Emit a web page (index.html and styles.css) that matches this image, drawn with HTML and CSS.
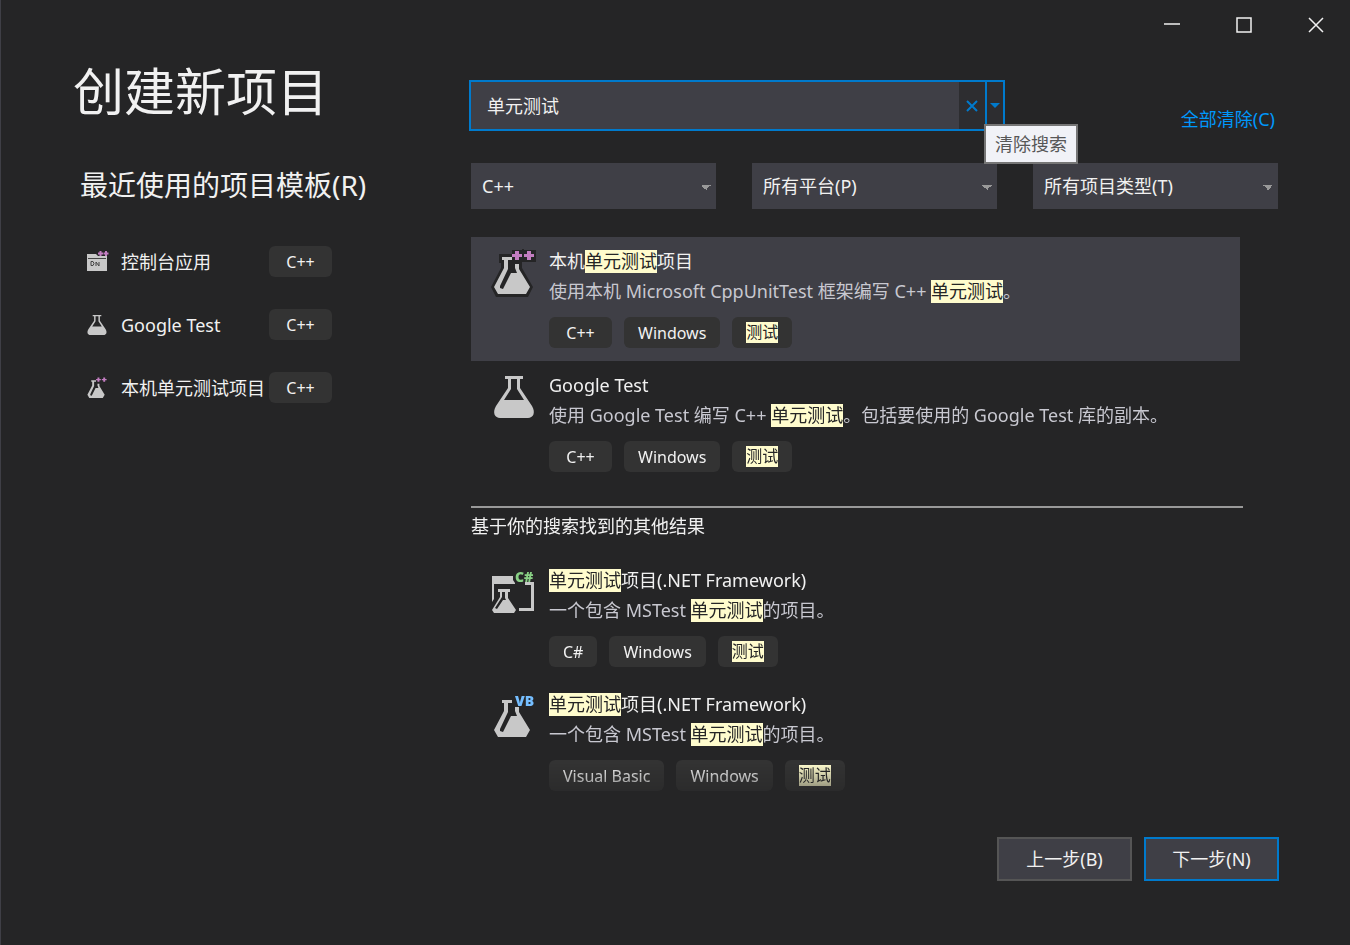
FILE: index.html
```html
<!DOCTYPE html>
<html lang="zh-CN">
<head>
<meta charset="utf-8">
<title>创建新项目</title>
<link rel="stylesheet" href="styles.css">
</head>
<body>
<svg class="sprite" aria-hidden="true">
  <symbol id="flask" viewBox="0 -3 46 50">
    <path fill="#c8c8c8" fill-rule="evenodd" d="M14 1h18v3h-3v9l12 18c4 7 1 12-4 12H9c-5 0-8-5-4-12l12-18V4h-3zM20 4v10l-7 11h20l-7-11V4z"/>
  </symbol>
  <symbol id="flask-tilt" viewBox="0 0 46 50">
    <path fill="#c8c8c8" d="M11 9h12v7h5v5l11 18-4 7H7l-4-7 10-19v-8h-2z"/>
    <path fill="#252526" d="M17 12h4V9h3v11l2 5h-6l-8 16-3-1v-2l8-17z"/>
  </symbol>
  <symbol id="flask-cpp" viewBox="0 0 46 50">
    <path fill="#252526" d="M8 6h13V2h10V1h2v1h12v12H31v6l11 19-5 10H5L0 39l10-19v-5H8z"/>
    <use href="#flask-tilt"/>
    <path fill="#252526" d="M21 5h10v9H21z"/>
    <path fill="#c27dc0" d="M24 3h4v3h3v3h-3v3h-4V9h-3V6h3zM36 3h4v3h3v3h-3v3h-4V9h-3V6h3z"/>
  </symbol>
</svg>
<div class="window">
  <header class="titlebar">
    <button aria-label="最小化"><svg viewBox="0 0 16 16"><path d="M0 7h16"/></svg></button>
    <button aria-label="最大化"><svg viewBox="0 0 16 16"><path d="M1 1h14v14H1z"/></svg></button>
    <button aria-label="关闭"><svg viewBox="0 0 16 16"><path d="M1 1l14 14M15 1L1 15"/></svg></button>
  </header>
  <main class="content">
    <aside class="recent">
      <h1>创建新项目</h1>
      <h2>最近使用的项目模板(R)</h2>
      <ul>
        <li><svg class="small-icon" viewBox="0 0 24 24"><path fill="#c8c8c8" d="M2 4h9l2 2h9v15H2z"/><path stroke="#444" fill="none" d="M3 8.500h18M6 11.500v4h2l1-2-1-2zM11 16v-4l3 4v-4"/><path stroke="#c27dc0" stroke-width="2" d="M15.500 1v5M13 3.500h5M21 1v5M18.500 3.500h5"/></svg><span>控制台应用</span><b class="tag cpp">C++</b></li>
        <li><svg class="small-icon"><use href="#flask"/></svg><span>Google Test</span><b class="tag cpp">C++</b></li>
        <li><svg class="small-icon"><use href="#flask-cpp"/></svg><span>本机单元测试项目</span><b class="tag cpp">C++</b></li>
      </ul>
    </aside>
    <section class="search">
      <div class="search-row">
        <div class="search-box">
          <input type="text" value="单元测试" aria-label="搜索模板">
          <button class="clear" aria-label="清除搜索"><svg viewBox="0 0 12 12"><path d="M1 1l10 10M11 1L1 11"/></svg></button>
          <button class="history" aria-label="搜索历史"><svg viewBox="0 0 10 5"><path d="M0 0h10L5 5z"/></svg></button>
          <div class="tooltip" role="tooltip">清除搜索</div>
        </div>
        <a class="clear-all" href="#">全部清除(C)</a>
      </div>
      <div class="filters">
        <select aria-label="语言"><option>C++</option></select>
        <select aria-label="平台"><option>所有平台(P)</option></select>
        <select aria-label="项目类型"><option>所有项目类型(T)</option></select>
      </div>
      <div class="results">
        <article class="item selected">
          <svg class="icon"><use href="#flask-cpp"/></svg>
          <div><h3>本机<mark>单元测试</mark>项目</h3>
          <p>使用本机 Microsoft CppUnitTest 框架编写 C++ <mark>单元测试</mark>。</p>
          <div class="tags"><span class="tag cpp">C++</span><span class="tag">Windows</span><span class="tag"><mark>测试</mark></span></div></div>
        </article>
        <article class="item">
          <svg class="icon"><use href="#flask"/></svg>
          <div><h3>Google Test</h3>
          <p>使用 Google Test 编写 C++ <mark>单元测试</mark>。包括要使用的 Google Test 库的副本。</p>
          <div class="tags"><span class="tag cpp">C++</span><span class="tag">Windows</span><span class="tag"><mark>测试</mark></span></div></div>
        </article>
        <h4>基于你的搜索找到的其他结果</h4>
        <article class="item">
          <svg class="icon" viewBox="0 0 46 50"><path fill="#c8c8c8" d="M1 9h21v4l2 3v1H3v15l-2 3zM34 15h9v29H28v-3h12V18h-6z"/><path fill="#c8c8c8" d="M7 22h12v3h-2v6l8 12-2 3H3l-2-3 8-13v-5H7z"/><path fill="#252526" d="M11 25h3v6l1 2h-3L6 42l-2-1 7-11z"/><text class="badge cs" x="24" y="15">C#</text></svg>
          <div><h3><mark>单元测试</mark>项目(.NET Framework)</h3>
          <p>一个包含 MSTest <mark>单元测试</mark>的项目。</p>
          <div class="tags"><span class="tag">C#</span><span class="tag">Windows</span><span class="tag"><mark>测试</mark></span></div></div>
        </article>
        <article class="item">
          <svg class="icon" viewBox="0 0 46 50"><use href="#flask-tilt"/><text class="badge vb" x="24" y="15">VB</text></svg>
          <div><h3><mark>单元测试</mark>项目(.NET Framework)</h3>
          <p>一个包含 MSTest <mark>单元测试</mark>的项目。</p>
          <div class="tags"><span class="tag">Visual Basic</span><span class="tag">Windows</span><span class="tag"><mark>测试</mark></span></div></div>
        </article>
      </div>
    </section>
  </main>
  <footer class="actions">
    <button>上一步(B)</button>
    <button class="primary">下一步(N)</button>
  </footer>
</div>
</body>
</html>
```
FILE: styles.css
```css
* { box-sizing: border-box; }
body {
  margin: 0;
  background: #252526;
  color: #f1f1f1;
  font: 18px/24px "Noto Sans", "Noto Sans CJK SC", sans-serif;
}
h1, h2, h3, h4, p, ul { margin: 0; padding: 0; font-weight: 400; }
button, input, select { font: inherit; color: inherit; border: 0; border-radius: 0; margin: 0; padding: 0; }
.sprite { position: absolute; width: 0; height: 0; }
.window { min-height: 100vh; display: flex; flex-direction: column; border-left: 1px solid #3f3f46; }
.titlebar { display: flex; justify-content: flex-end; gap: 4px; height: 50px; }
.titlebar button { width: 68px; background: none; display: grid; place-items: center; }
.titlebar svg { width: 16px; height: 16px; fill: none; stroke: #f1f1f1; stroke-width: 1.5; }
.content { flex: 1; display: grid; grid-template-columns: 396px minmax(0, 1fr); padding: 0 72px 0 72px; }
.recent h1 { font-size: 51px; line-height: 66px; margin-top: 8px; }
.recent h2 { font-size: 28px; line-height: 36px; margin: 43px 0 0 7px; }
.recent ul { list-style: none; margin: 43px 0 0 12px; display: grid; gap: 32px; }
.recent li { display: grid; grid-template-columns: 24px 160px auto; justify-content: start; align-items: center; height: 31px; }
.recent li span { padding-left: 12px; white-space: nowrap; }
.small-icon { width: 24px; height: 24px; }
.tag { display: inline-flex; align-items: center; justify-content: center; height: 31px; padding: 0 14px; border-radius: 6px; background: #333; font-size: 16px; font-weight: 400; }
.tag.cpp { min-width: 63px; }
.tag mark { line-height: 21px; }
mark { display: inline-block; background: #fffccd; color: #252526; line-height: 23px; }
.search-row { display: flex; justify-content: space-between; padding: 30px 3px 0 0; }
.search-box { position: relative; display: flex; width: 536px; height: 51px; border: 2px solid #007acc; background: #3f3f46; }
.search-box input { flex: 1; min-width: 0; background: none; padding-left: 16px; outline: 0; }
.search-box button { background: #2d2d30; display: grid; place-items: center; }
.clear { width: 26px; }
.clear svg { width: 12px; height: 12px; stroke: #007acc; stroke-width: 2; }
.history { width: 18px; }
.search-box .history { border-left: 2px solid #007acc; }
.history svg { width: 10px; height: 5px; fill: #007acc; }
.tooltip { position: absolute; top: 42px; left: 513px; padding: 6px 9px; border: 2px solid #767676; background: #f1f2f7; color: #575757; white-space: nowrap; }
.clear-all { color: #0097fb; text-decoration: none; margin-top: 27px; }
.filters { display: grid; grid-template-columns: repeat(3, 1fr); gap: 36px; margin: 32px 0 0 2px; }
.filters select {
  appearance: none; height: 46px; padding: 0 32px 0 11px;
  background:
    linear-gradient(45deg, transparent 50%, #999 50%) right 10px top 22px / 5px 5px no-repeat,
    linear-gradient(315deg, transparent 50%, #999 50%) right 5px top 22px / 5px 5px no-repeat,
    #3f3f46;
}
.results { margin: 28px 35px 0 2px; mask-image: linear-gradient(#000 calc(100% - 40px), rgba(0, 0, 0, 0.2)); }
.item { display: flex; padding: 12px 0 13px 20px; margin-right: 3px; }
.item.selected { background: #3f3f46; }
.icon { width: 46px; height: 50px; margin: -1px 12px 0 0; flex: none; overflow: visible; }
.item p { margin-top: 6px; color: #c8c8d0; }
.tags { display: flex; gap: 12px; margin-top: 14px; }
h4 { font-size: 18px; margin: 21px 0 18px; padding-top: 6px; border-top: 2px solid #999; }
.item h3 { font-size: 18px; }
.badge { font: 800 14px "Open Sans", sans-serif; }
.cs { fill: #89d185; }
.vb { fill: #75beff; }
.actions { display: flex; justify-content: flex-end; gap: 12px; padding: 33px 71px 64px; }
.actions button { width: 135px; height: 44px; background: #3f3f46; border: 2px solid #555; }
.actions .primary { border-color: #007acc; }
```
